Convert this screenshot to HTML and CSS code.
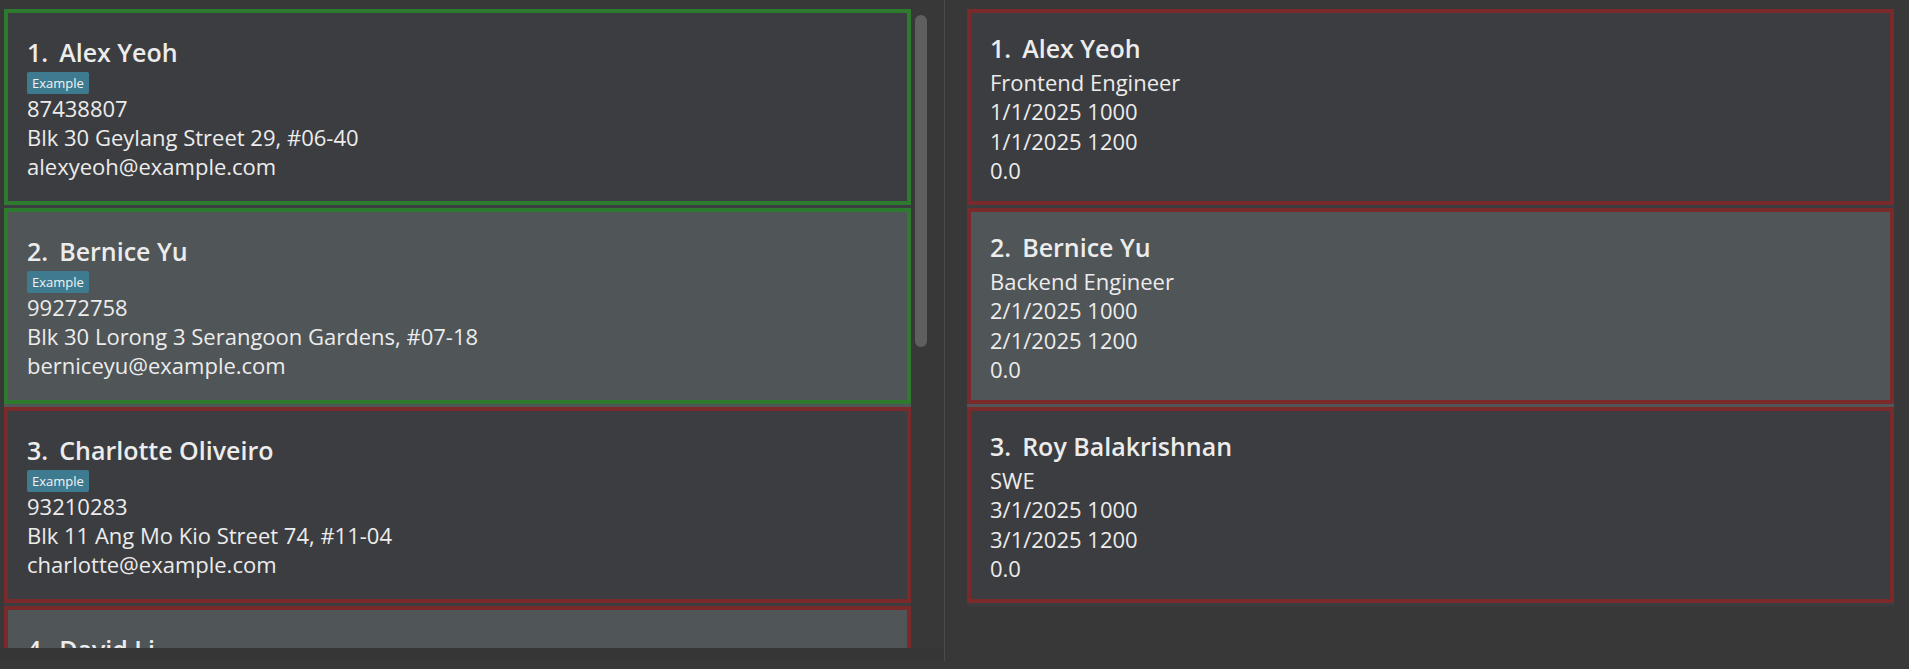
FILE: index.html
```html
<!DOCTYPE html>
<html>
<head>
<meta charset="utf-8">
<link rel="stylesheet" href="styles.css">
</head>
<body>
<div class="main">
  <div class="left">
    <div class="left-view">
      <div class="list">
        <div class="cell dark"><div class="card green person">
          <div class="name"><span class="idx">1.</span>Alex Yeoh</div>
          <div class="tags"><span class="tag">Example</span></div>
          <div class="line">87438807</div>
          <div class="line">Blk 30 Geylang Street 29, #06-40</div>
          <div class="line">alexyeoh@example.com</div>
        </div></div>
        <div class="cell light"><div class="card green person">
          <div class="name"><span class="idx">2.</span>Bernice Yu</div>
          <div class="tags"><span class="tag">Example</span></div>
          <div class="line">99272758</div>
          <div class="line">Blk 30 Lorong 3 Serangoon Gardens, #07-18</div>
          <div class="line">berniceyu@example.com</div>
        </div></div>
        <div class="cell dark"><div class="card red person">
          <div class="name"><span class="idx">3.</span>Charlotte Oliveiro</div>
          <div class="tags"><span class="tag">Example</span></div>
          <div class="line">93210283</div>
          <div class="line">Blk 11 Ang Mo Kio Street 74, #11-04</div>
          <div class="line">charlotte@example.com</div>
        </div></div>
        <div class="cell light"><div class="card red person">
          <div class="name"><span class="idx">4.</span>David Li</div>
        </div></div>
      </div>
      <div class="scrollbar"><div class="thumb"></div></div>
    </div>
    <div class="left-foot"></div>
  </div>
  <div class="divider"></div>
  <div class="right">
    <div class="cell dark"><div class="card red job">
      <div class="name"><span class="idx">1.</span>Alex Yeoh</div>
      <div class="line">Frontend Engineer</div>
      <div class="line">1/1/2025 1000</div>
      <div class="line">1/1/2025 1200</div>
      <div class="line">0.0</div>
    </div></div>
    <div class="cell light"><div class="card red job">
      <div class="name"><span class="idx">2.</span>Bernice Yu</div>
      <div class="line">Backend Engineer</div>
      <div class="line">2/1/2025 1000</div>
      <div class="line">2/1/2025 1200</div>
      <div class="line">0.0</div>
    </div></div>
    <div class="cell dark"><div class="card red job">
      <div class="name"><span class="idx">3.</span>Roy Balakrishnan</div>
      <div class="line">SWE</div>
      <div class="line">3/1/2025 1000</div>
      <div class="line">3/1/2025 1200</div>
      <div class="line">0.0</div>
    </div></div>
  </div>
</div>
<div class="footer"></div>
</body>
</html>
```

FILE: styles.css
```css
html, body {
  margin: 0;
  padding: 0;
}
body {
  background: #383838;
  color: #ececec;
  font-family: "Open Sans", "Noto Sans", sans-serif;
  height: 669px;
  overflow: hidden;
  display: flex;
  flex-direction: column;
}
.main {
  display: flex;
  height: 661px;
}
.left {
  width: 944px;
  display: flex;
  flex-direction: column;
}
.left-view {
  height: 648px;
  display: flex;
  overflow: hidden;
}
.list {
  width: 907px;
  padding: 9px 0 0 4px;
}
.scrollbar {
  width: 12px;
  margin-left: 4px;
  padding-top: 15px;
}
.thumb {
  height: 332px;
  background: #5f5f5f;
  border-radius: 6px;
}
.left-foot {
  height: 13px;
  background: #363636;
}
.divider {
  width: 1px;
  background: #4b4b4b;
}
.right {
  flex: 1;
  padding: 9px 15px 0 22px;
}
.cell {
  padding-bottom: 3px;
}
.cell.dark {
  background: #3c3d40;
}
.cell.light {
  background: #505558;
}
.card {
  box-sizing: border-box;
  height: 196px;
  border: 4px solid;
  padding-left: 19px;
}
.card.green {
  border-color: #2e7a2f;
}
.card.red {
  border-color: #7b2a2c;
}
.card.person {
  padding-top: 23px;
}
.card.job {
  padding-top: 19px;
}
.name {
  font-size: 25px;
  line-height: 32px;
  font-weight: 600;
  white-space: nowrap;
}
.idx {
  margin-right: 11px;
}
.tags {
  margin-top: 4px;
  height: 22px;
  display: flex;
}
.tag {
  background: #3e7b91;
  color: #f2f2f2;
  font-size: 13px;
  line-height: 22px;
  padding: 0 5px;
  border-radius: 2px;
}
.line {
  font-size: 22px;
  line-height: 29px;
  white-space: nowrap;
}
.job .name + .line {
  margin-top: 4px;
}
.job .line {
  line-height: 29.3px;
}
```
